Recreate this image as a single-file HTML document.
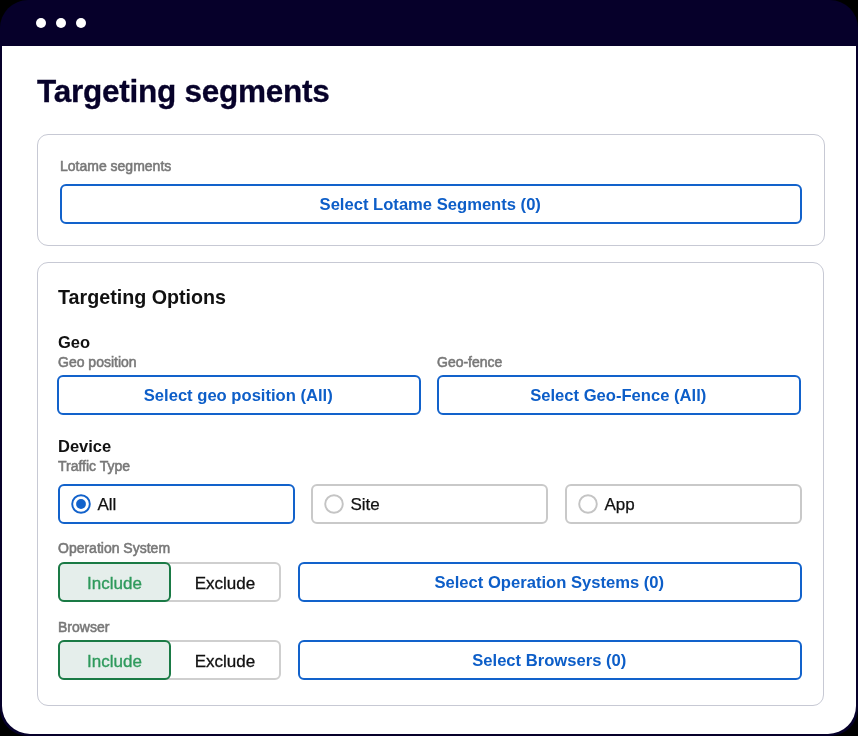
<!DOCTYPE html>
<html><head><meta charset="utf-8">
<style>
*{box-sizing:border-box;margin:0;padding:0}
html,body{width:858px;height:736px;background:#000;overflow:hidden;font-family:"Liberation Sans",sans-serif}
.win{position:absolute;left:0;top:0;width:858px;height:736px;background:#06002a;border-radius:28px;overflow:hidden}
.dot{position:absolute;top:18px;width:10px;height:10px;border-radius:50%;background:#fff}
.content{position:absolute;left:2px;top:46px;width:854px;height:688px;background:#fff;border-radius:0 0 28px 28px}
.abs{position:absolute}
.title{position:absolute;left:37px;top:73px;font-size:31.5px;letter-spacing:-0.25px;font-weight:bold;color:#07022a;-webkit-text-stroke:0.3px #07022a;white-space:nowrap;line-height:36px}
.card{position:absolute;border:1.5px solid #c7c9d4;border-radius:11px;background:#fff}
.lbl{position:absolute;font-size:14px;color:#787878;-webkit-text-stroke:0.55px #787878;white-space:nowrap;line-height:16px}
.btn{position:absolute;border:2px solid #1262cb;border-radius:6px;color:#0d5ec8;font-weight:bold;font-size:16.6px;padding-top:1px;padding-right:1.5px;display:flex;align-items:center;justify-content:center;white-space:nowrap}
.h2{position:absolute;font-size:19.7px;font-weight:bold;color:#111;white-space:nowrap;line-height:22px}
.h3{position:absolute;font-size:16.5px;font-weight:bold;color:#111;white-space:nowrap;line-height:20px}
.radio{position:absolute;border:2px solid #c9c9c9;border-radius:6px;font-size:17px;color:#111}
.radio.sel{border-color:#1262cb}
.rs{position:absolute;left:8.8px;top:6px}
.rt{-webkit-text-stroke:0.25px #111;position:absolute;left:37.5px;top:8.5px;line-height:20px;white-space:nowrap}
.seg{position:absolute;border:2px solid #cfcfcf;border-radius:6px;display:flex;font-size:17px;color:#111}
.inc{position:absolute;left:-2px;top:-2px;width:113px;bottom:-2px;padding-top:3px;border:2px solid #1a7a45;border-radius:6px;background:#e5eeeb;color:#2e9a5c;-webkit-text-stroke:0.35px #2e9a5c;display:flex;align-items:center;justify-content:center}
.exc{-webkit-text-stroke:0.3px #111;position:absolute;left:111px;right:0;top:0;bottom:0;padding-top:3px;display:flex;align-items:center;justify-content:center}
</style></head><body><div id="root" style="position:absolute;left:0;top:0;width:858px;height:736px;will-change:transform">
<div class="win">
  <div class="dot" style="left:36px"></div>
  <div class="dot" style="left:56px"></div>
  <div class="dot" style="left:76px"></div>
  <div class="content"></div>
</div>
<div class="title">Targeting segments</div>

<div class="card" style="left:37px;top:134px;width:787.5px;height:111.5px"></div>
<div class="lbl" style="left:60px;top:158px">Lotame segments</div>
<div class="btn" style="left:60px;top:184px;width:742px;height:40px">Select Lotame Segments (0)</div>

<div class="card" style="left:36.6px;top:262.4px;width:787.6px;height:443.6px"></div>
<div class="h2" style="left:58px;top:286px">Targeting Options</div>
<div class="h3" style="left:58px;top:332px">Geo</div>
<div class="lbl" style="left:58px;top:354px">Geo position</div>
<div class="lbl" style="left:437px;top:354px">Geo-fence</div>
<div class="btn" style="left:57px;top:375px;width:364px;height:40px">Select geo position (All)</div>
<div class="btn" style="left:437px;top:375px;width:364px;height:40px">Select Geo-Fence (All)</div>

<div class="h3" style="left:58px;top:436px">Device</div>
<div class="lbl" style="left:58px;top:458px">Traffic Type</div>
<div class="radio sel" style="left:58px;top:484px;width:237px;height:40px"><svg class="rs" width="24" height="24" viewBox="0 0 24 24"><circle cx="12" cy="12" r="8.8" fill="none" stroke="#1262cb" stroke-width="1.9"/><circle cx="12" cy="12" r="4.9" fill="#1262cb"/></svg><span class="rt">All</span></div>
<div class="radio" style="left:311px;top:484px;width:237px;height:40px"><svg class="rs" width="24" height="24" viewBox="0 0 24 24"><circle cx="12" cy="12" r="8.8" fill="none" stroke="#c4c4c4" stroke-width="1.9"/></svg><span class="rt">Site</span></div>
<div class="radio" style="left:565px;top:484px;width:237px;height:40px"><svg class="rs" width="24" height="24" viewBox="0 0 24 24"><circle cx="12" cy="12" r="8.8" fill="none" stroke="#c4c4c4" stroke-width="1.9"/></svg><span class="rt">App</span></div>

<div class="lbl" style="left:58px;top:540px">Operation System</div>
<div class="seg" style="left:58px;top:562px;width:223px;height:40px"><div class="inc">Include</div><div class="exc">Exclude</div></div>
<div class="btn" style="left:298px;top:562px;width:504px;height:40px">Select Operation Systems (0)</div>

<div class="lbl" style="left:58px;top:619px">Browser</div>
<div class="seg" style="left:58px;top:640px;width:223px;height:40px"><div class="inc">Include</div><div class="exc">Exclude</div></div>
<div class="btn" style="left:298px;top:640px;width:504px;height:40px">Select Browsers (0)</div>
</div></body></html>
